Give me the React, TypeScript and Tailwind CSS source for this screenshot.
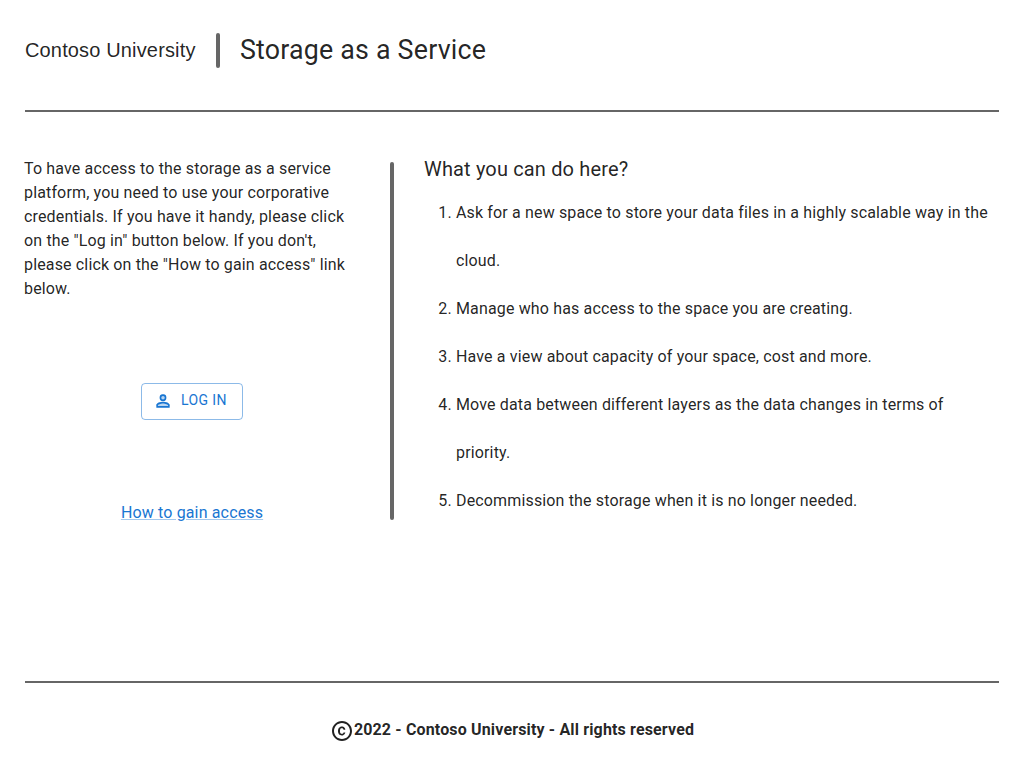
import React from "react";

const tasks = [
  "Ask for a new space to store your data files in a highly scalable way in the cloud.",
  "Manage who has access to the space you are creating.",
  "Have a view about capacity of your space, cost and more.",
  "Move data between different layers as the data changes in terms of priority.",
  "Decommission the storage when it is no longer needed.",
];

export default function App() {
  return (
    <div className="flex h-screen flex-col bg-white px-6 font-['Roboto',sans-serif] text-base leading-6 tracking-[0.15px] text-black/87">
      <header className="flex h-[110px] shrink-0 items-start pt-[33px]">
        <div className="flex h-[35px] items-center">
          <span className="w-48 pb-0.5 pl-px font-['Liberation_Sans',sans-serif] text-xl tracking-[0.15px]">Contoso University</span>
          <span className="h-[35px] w-1 rounded-sm bg-[#666]" />
          <h1 className="ml-5 text-[26.8px] leading-[35px] tracking-[0.2px]">Storage as a Service</h1>
        </div>
      </header>
      <div className="mx-px h-0.5 shrink-0 bg-[#666]" />
      <main className="flex h-[569px] shrink-0 pt-[45px]">
        <section className="flex w-[336px] shrink-0 flex-col items-center">
          <p className="w-full">
            To have access to the storage as a service platform, you need to use your corporative credentials. If you have it handy, please click on the "Log in" button below. If you don't, please click on the "How to gain access" link below.
          </p>
          <button className="mt-[82px] flex h-[37px] w-[102px] items-center rounded border border-[#1976d2]/50 pb-0.5 pl-[11px] text-sm tracking-[0.4px] text-[#1976d2]">
            <svg className="mt-px mr-2 size-5" viewBox="0 0 24 24" fill="currentColor">
              <path fillOpacity=".3" d="M4 18v-1c0-2.66 5.33-4 8-4s8 1.34 8 4v1zM12 4a4 4 0 1 0 0 8 4 4 0 0 0 0-8" />
              <path d="M12 5.9a2.1 2.1 0 1 1 0 4.2 2.1 2.1 0 0 1 0-4.2m0 9c2.97 0 6.1 1.46 6.1 2.1v1.1H5.9V17c0-.64 3.13-2.1 6.1-2.1M12 4a4 4 0 1 0 0 8 4 4 0 0 0 0-8m0 9c-2.67 0-8 1.34-8 4v3h16v-3c0-2.66-5.33-4-8-4" />
            </svg>
            <span className="pb-0.5">LOG IN</span>
          </button>
          <a href="#" className="mt-[81px] text-[#1976d2] underline decoration-[#1976d2]/40">How to gain access</a>
        </section>
        <div className="mt-[5px] ml-[30px] h-[358px] w-1 shrink-0 rounded-sm bg-[#666]" />
        <section className="ml-[30px] flex-1">
          <h2 className="mb-2 text-xl leading-6">What you can do here?</h2>
          <ol className="list-decimal pl-8 leading-[48px]">
            {tasks.map((task) => <li key={task}>{task}</li>)}
          </ol>
        </section>
      </main>
      <div className="mx-px h-0.5 shrink-0 bg-[#666]" />
      <footer className="mt-[35px] flex h-6 items-center justify-center text-base font-bold">
        <svg className="mt-0.5 size-6" viewBox="0 0 24 24" fill="currentColor">
          <path d="M10.08 10.86c.05-.33.16-.62.3-.87s.34-.46.59-.62c.24-.15.54-.22.91-.23.23.01.44.05.63.13.2.09.38.21.52.36s.25.33.34.53.13.42.14.64h1.79c-.02-.47-.11-.9-.28-1.29s-.4-.73-.7-1.01-.66-.5-1.08-.66-.88-.23-1.39-.23c-.65 0-1.22.11-1.7.34s-.88.53-1.2.92-.56.84-.71 1.36S8 11.29 8 11.87v.27c0 .58.08 1.12.23 1.64s.39.97.71 1.35.72.69 1.2.91 1.05.34 1.7.34c.47 0 .91-.08 1.32-.23s.77-.36 1.08-.63.56-.58.74-.94.29-.74.3-1.15h-1.79c-.01.21-.06.4-.15.58s-.21.33-.36.46-.32.23-.52.3c-.19.07-.39.09-.6.1-.36-.01-.66-.08-.89-.23-.25-.16-.45-.37-.59-.62s-.25-.55-.3-.88-.08-.67-.08-1v-.27c0-.35.03-.68.08-1.01M12 2C6.48 2 2 6.48 2 12s4.48 10 10 10 10-4.48 10-10S17.52 2 12 2m0 18c-4.41 0-8-3.59-8-8s3.59-8 8-8 8 3.59 8 8-3.59 8-8 8" />
        </svg>
        <span>2022 - Contoso University - All rights reserved</span>
      </footer>
    </div>
  );
}
